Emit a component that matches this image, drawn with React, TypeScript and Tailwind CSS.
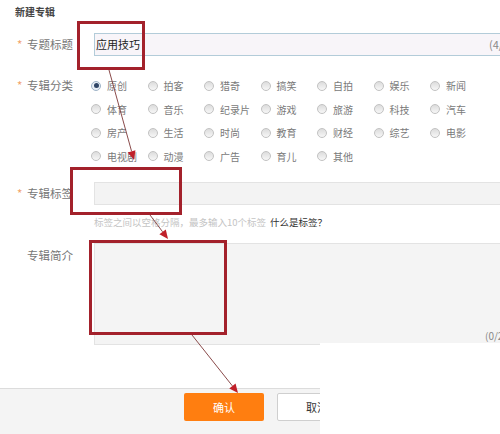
import React from 'react';

const categories = [
  ['原创', '拍客', '猎奇', '搞笑', '自拍', '娱乐', '新闻'],
  ['体育', '音乐', '纪录片', '游戏', '旅游', '科技', '汽车'],
  ['房产', '生活', '时尚', '教育', '财经', '综艺', '电影'],
  ['电视剧', '动漫', '广告', '育儿', '其他'],
];

const Radio: React.FC<{ checked?: boolean; label: string }> = ({ checked, label }) => (
  <label className="flex items-center h-[23.5px] gap-[6px] text-[10px] text-[#7a7a7a]">
    <span
      className={`flex items-center justify-center w-[10px] h-[10px] rounded-full border ${
        checked ? 'border-[#9fb4c8] bg-[#e8eef5]' : 'border-[#c2c2c2] bg-linear-to-b from-[#dcdcdc] to-[#f7f7f7]'
      }`}
    >
      {checked && <span className="w-[5px] h-[5px] rounded-full bg-[#2f4566]" />}
    </span>
    <span>{label}</span>
  </label>
);

const FieldLabel: React.FC<{ text: string; required?: boolean }> = ({ text, required }) => (
  <div className="flex shrink-0 items-center w-[94px] h-[23px] pl-[17px] text-[11.5px] text-[#777]">
    <span className="w-[10px] text-[#f2a36b]">{required ? '*' : ''}</span>
    <span>{text}</span>
  </div>
);

// arrow line + filled head
const Arrow: React.FC<{ x1: number; y1: number; x2: number; y2: number }> = ({ x1, y1, x2, y2 }) => {
  const a = Math.atan2(y2 - y1, x2 - x1);
  const len = 9;
  const w = 4;
  const bx = x2 - len * Math.cos(a);
  const by = y2 - len * Math.sin(a);
  const pts = [
    `${x2},${y2}`,
    `${bx + w * Math.sin(a)},${by - w * Math.cos(a)}`,
    `${bx - w * Math.sin(a)},${by + w * Math.cos(a)}`,
  ].join(' ');
  return (
    <g>
      <line x1={x1} y1={y1} x2={bx} y2={by} stroke="#8a4b4b" strokeWidth={1} />
      <polygon points={pts} fill="#c0202a" />
    </g>
  );
};

export default function App() {
  return (
    <div className="relative w-[500px] h-[434px] overflow-hidden bg-white font-['Noto_Sans_CJK_SC','Noto_Sans',sans-serif]">
      {/* Title */}
      <div className="h-[24px] pl-[15px] pt-[4px] text-[10px] font-bold text-[#444]">新建专辑</div>

      {/* 专题标题 */}
      <div className="flex mt-[9px]">
        <FieldLabel text="专题标题" required />
        <div className="flex shrink-0 items-center w-[430px] h-[23px] border border-[#b3ccd9] bg-[#f8f5f9] pl-[1px] text-[11px]">
          <span className="w-[393px] flex items-center text-[#222]">
            应用技巧
            <span className="ml-[2px] w-px h-[13px] bg-[#222]" />
          </span>
          <span className="text-[#888]">(4/15)</span>
        </div>
      </div>

      {/* 专辑分类 */}
      <div className="flex mt-[18px]">
        <div className="self-start">
          <FieldLabel text="专辑分类" required />
        </div>
        <div className="ml-[-3px] grid shrink-0 grid-cols-[repeat(7,56.5px)]">
          {categories.flat().map((c, i) => (
            <Radio key={c} label={c} checked={i === 0} />
          ))}
        </div>
      </div>

      {/* 专辑标签 */}
      <div className="flex mt-[14px]">
        <FieldLabel text="专辑标签" required />
        <div className="shrink-0 w-[430px] h-[23px] border border-[#e3e3e3] bg-[#f3f3f3]" />
      </div>
      <div className="flex items-center mt-[10px] pl-[94px] h-[14px] text-[9.5px]">
        <span className="text-[#c4c4c4]">标签之间以空格分隔，最多输入10个标签</span>
        <span className="ml-[4px] text-[#333]">什么是标签？</span>
      </div>

      {/* 专辑简介 */}
      <div className="flex mt-[14px]">
        <div className="self-start pt-[1px]">
          <FieldLabel text="专辑简介" />
        </div>
        <div className="flex shrink-0 flex-col justify-end w-[430px] h-[102px] border border-[#e3e3e3] bg-[#f4f4f4] pb-[1px]">
          <span className="pl-[390px] text-[10px] text-[#888]">(0/200)</span>
        </div>
      </div>

      {/* Footer */}
      <div className="mt-[43px] h-[60px] border-t border-[#dcdcdc] bg-[#f4f4f4] pt-[4px] flex">
        <button className="ml-[184px] w-[80px] h-[28px] rounded-[2px] bg-[#ff7e10] text-white text-[11px]">确认</button>
        <button className="ml-[13px] w-[80px] h-[28px] rounded-[2px] border border-[#cfcfcf] bg-white text-[#333] text-[11px]">取消</button>
      </div>

      {/* cropped-off area of the screenshot */}
      <div className="absolute left-[320px] top-[343px] right-0 bottom-0 bg-white" />

      {/* annotations */}
      <svg className="absolute inset-0 pointer-events-none" width="500" height="434">
        <rect x="78.5" y="22.5" width="65" height="46" fill="none" stroke="#a3212b" strokeWidth="3" />
        <rect x="71.5" y="168.5" width="109" height="45" fill="none" stroke="#a3212b" strokeWidth="3" />
        <rect x="90.5" y="241.5" width="135" height="92" fill="none" stroke="#a3212b" strokeWidth="3" />
        <Arrow x1={109} y1={70} x2={134} y2={160} />
        <Arrow x1={150} y1={215} x2={168} y2={239} />
        <Arrow x1={192} y1={335} x2={238} y2={393} />
      </svg>
    </div>
  );
}
